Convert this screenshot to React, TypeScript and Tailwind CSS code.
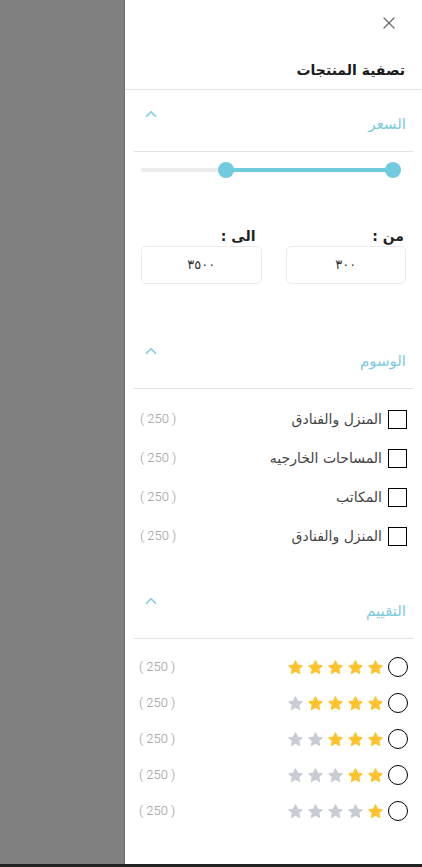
import React from 'react';
import { ChevronUp, X } from 'lucide-react';

const font = { fontFamily: '"DejaVu Sans", "Noto Sans", sans-serif' };

const tags = ['المنزل والفنادق', 'المساحات الخارجيه', 'المكاتب', 'المنزل والفنادق'];

const Star = ({ on }: { on: boolean }) => (
  <svg width="17" height="17" viewBox="0 0 24 24">
    <path
      d="M12 2.5l2.9 6.1 6.6.8-4.9 4.6 1.3 6.6L12 17.3l-5.9 3.3 1.3-6.6-4.9-4.6 6.6-.8z"
      fill={on ? '#ffc22c' : '#c9cdd3'}
      stroke={on ? '#ffc22c' : '#c9cdd3'}
      strokeWidth="1.5"
      strokeLinejoin="round"
    />
  </svg>
);

const SectionHeader = ({ title }: { title: string }) => (
  <div className="flex items-start justify-between pr-[7px] pl-[8px] h-[62px] border-b border-[#e2e2e2]">
    <span className="text-[15px] text-[#7ccadb] mt-[23px]">{title}</span>
    <ChevronUp size={18} strokeWidth={2.2} className="text-[#7ccfe0] mt-[15px]" />
  </div>
);

const Count = () => (
  <span dir="ltr" className="text-[13px] text-[#9a9a9a]" style={{ fontFamily: '"Roboto", sans-serif', fontWeight: 300 }}>
    ( 250 )
  </span>
);

export default function App() {
  return (
    <div className="w-[422px] h-[867px] flex flex-col bg-white" style={font}>
      <div className="flex flex-1">
        <div className="w-[125px] bg-[#808080] border-r border-[#6e6e6e]" />
        <div dir="rtl" className="flex-1 bg-white flex flex-col">
          <div className="flex justify-start pr-[23px] pt-[13px]">
            <X size={20} strokeWidth={1.5} className="text-[#6b6b6b]" />
          </div>
          <div className="pr-[17px] mt-[25px] pb-[7px] border-b border-[#e2e2e2]">
            <span className="text-[14px] font-bold text-[#1a1a1a]">تصفية المنتجات</span>
          </div>

          <div className="px-[9px]">
            <SectionHeader title="السعر" />
            <div className="relative h-[36px] mx-[7px]" dir="ltr">
              <div className="absolute left-0 right-[6px] top-[16px] h-[4px] rounded-full bg-[#ececec]" />
              <div className="absolute left-[85px] right-[13px] top-[16px] h-[4px] bg-[#6fcbdc]" />
              <div className="absolute left-[77px] top-[10px] w-[16px] h-[16px] rounded-full bg-[#71cadd]" />
              <div className="absolute right-[5px] top-[10px] w-[16px] h-[16px] rounded-full bg-[#71cadd]" />
            </div>

            <div className="flex gap-[24px] px-[7px] mt-[39px]">
              <div className="flex-1 flex flex-col">
                <span className="text-[14px] leading-[18px] font-bold text-[#222] pr-[2px]">من :</span>
                <div className="h-[38px] mt-[1px] border border-[#ebebeb] rounded-[5px] flex items-center justify-center text-[13px] text-[#333]">
                  ٣٠٠
                </div>
              </div>
              <div className="flex-1 flex flex-col">
                <span className="text-[14px] leading-[18px] font-bold text-[#222] pr-[6px]">الى :</span>
                <div className="h-[38px] mt-[1px] border border-[#ebebeb] rounded-[5px] flex items-center justify-center text-[13px] text-[#333]">
                  ٣٥٠٠
                </div>
              </div>
            </div>

            <div className="mt-[43px]">
              <SectionHeader title="الوسوم" />
            </div>
            <div className="flex flex-col pt-[21px] gap-[21px] px-[6px]">
              {tags.map((t, i) => (
                <div key={i} className="flex items-center justify-between h-[18px]">
                  <div className="flex items-center gap-[6px]">
                    <div className="w-[19px] h-[19px] border-[1.5px] border-black" />
                    <span className="text-[14px] text-[#444]">{t}</span>
                  </div>
                  <Count />
                </div>
              ))}
            </div>

            <div className="mt-[32px]">
              <SectionHeader title="التقييم" />
            </div>
            <div className="flex flex-col pt-[18px] gap-[16px] px-[5px]">
              {[5, 4, 3, 2, 1].map((n) => (
                <div key={n} className="flex items-center justify-between h-[20px]">
                  <div className="flex items-center gap-[4px]">
                    <div className="w-[20px] h-[20px] rounded-full border-[1.5px] border-black" />
                    <div className="flex gap-[3px]">
                      {[0, 1, 2, 3, 4].map((i) => (
                        <Star key={i} on={i < n} />
                      ))}
                    </div>
                  </div>
                  <Count />
                </div>
              ))}
            </div>
          </div>
        </div>
      </div>
      <div className="h-[3px] bg-[#222]" />
    </div>
  );
}
